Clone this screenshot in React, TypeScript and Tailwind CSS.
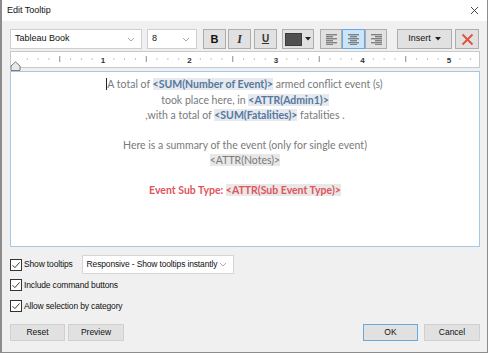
import React from "react";

const ui = { fontFamily: '"Liberation Sans", Arial, sans-serif' };
const body = { fontFamily: 'Lato, "Open Sans", Arial, sans-serif' };

function Chevron() {
  return (
    <svg width="8" height="5" viewBox="0 0 8 5" className="text-[#a0a0a0]">
      <path d="M1 1l3 3 3-3" fill="none" stroke="currentColor" strokeWidth="0.9" />
    </svg>
  );
}

function Caret() {
  return (
    <svg width="6" height="4" viewBox="0 0 6 4">
      <path d="M0 0h6L3 3.5z" fill="#222" />
    </svg>
  );
}

function AlignIcon({ kind }: { kind: "left" | "center" | "right" }) {
  const rows = [0, 1, 2, 3, 4, 5];
  return (
    <svg width="11" height="11" viewBox="0 0 11 11">
      {rows.map((r) => {
        const long = r % 2 === 0;
        const w = long ? 11 : 7;
        const x = kind === "left" ? 0 : kind === "center" ? (11 - w) / 2 : 11 - w;
        return <rect key={r} x={x} y={r * 2 + 0.3} width={w} height="1" fill="#5a5a5a" />;
      })}
    </svg>
  );
}

function Ruler() {
  const origin = 5.5;
  const inch = 86.5;
  const ticks: React.ReactNode[] = [];
  for (let i = 1; i < 54; i++) {
    const x = origin + (i * inch) / 8;
    if (x > 466) break;
    if (i % 8 === 0) {
      ticks.push(
        <text key={i} x={x} y="11" fontSize="8" fontWeight="700" textAnchor="middle" fill="#333" fontFamily="Liberation Sans, Arial, sans-serif">
          {i / 8}
        </text>
      );
    } else if (i % 4 === 0) {
      ticks.push(<rect key={i} x={x - 0.5} y="4" width="1" height="6" fill="#8a8a8a" />);
    } else {
      ticks.push(<rect key={i} x={x - 0.5} y="6.5" width="1" height="1" fill="#8a8a8a" />);
    }
  }
  return (
    <div className="relative h-[17px] bg-white border border-[#c8c8c8]">
      <svg width="467" height="15" viewBox="0 0 467 15" className="absolute left-0 top-0">
        {ticks}
      </svg>
      <svg width="11" height="10" viewBox="0 0 11 10" className="absolute left-[-1px] bottom-[-4px]">
        <path d="M1 9.5V5L5.5 0.8 10 5v4.5z" fill="#e8e8e8" stroke="#6e6e6e" strokeWidth="0.9" />
      </svg>
    </div>
  );
}

function Field({ children, red }: { children: React.ReactNode; red?: boolean }) {
  return (
    <span
      className={
        red
          ? "bg-[#e8e8e8] text-[#e0545a] font-bold"
          : "bg-[#e6e9ed] text-[#5577a0] font-bold"
      }
    >
      {children}
    </span>
  );
}

function Checkbox({ label }: { label: string }) {
  return (
    <label className="flex items-center gap-[2px]">
      <span className="w-[12px] h-[12px] bg-white border border-[#333] flex items-center justify-center">
        <svg width="10" height="10" viewBox="0 0 10 10">
          <path d="M1.5 5.2l2.4 2.4L8.6 2.4" fill="none" stroke="#222" strokeWidth="0.9" />
        </svg>
      </span>
      <span className="text-[8.5px] tracking-[-0.15px] text-[#111]">{label}</span>
    </label>
  );
}

const tb = "h-[20px] flex items-center justify-center bg-[#e1e1e1] border border-[#adadad]";
const btn = "w-[55px] h-[17px] bg-[#e1e1e1] border flex items-center justify-center text-[8.5px]";

export default function App() {
  return (
    <div
      className="w-[488px] h-[353px] bg-[#f0f0f0] border-l-2 border-b border-r border-[#8c8c8c] flex flex-col text-[#111]"
      style={ui}
    >
      <div className="h-[21px] bg-white flex items-center justify-between pl-[5px] pr-[8px]">
        <span className="text-[9px]">Edit Tooltip</span>
        <svg width="9" height="9" viewBox="0 0 9 9">
          <path d="M1 1l7 7M8 1L1 8" stroke="#333" strokeWidth="0.9" />
        </svg>
      </div>

      <div className="flex flex-col pl-[8px] pr-[7px]">
        <div className="flex items-center mt-[8px] h-[20px]">
          <div className="w-[132px] h-[20px] bg-white border border-[#cfcfcf] flex items-center justify-between pl-[4px] pr-[6px]">
            <span className="text-[9px]">Tableau Book</span>
            <Chevron />
          </div>
          <div className="w-[50px] h-[20px] bg-white border border-[#cfcfcf] flex items-center justify-between pl-[4px] pr-[6px] ml-[5px]">
            <span className="text-[9px]">8</span>
            <Chevron />
          </div>
          <div className={`${tb} w-[23px] ml-[6px]`}>
            <span className="text-[11px] font-bold">B</span>
          </div>
          <div className={`${tb} w-[23px] ml-[2px]`}>
            <span className="text-[12px] italic font-bold text-[#333]" style={{ fontFamily: '"Liberation Serif", serif' }}>I</span>
          </div>
          <div className={`${tb} w-[23px] ml-[3px]`}>
            <span className="text-[10px] font-bold underline leading-none text-[#333]">U</span>
          </div>
          <div className={`${tb} w-[32px] ml-[5px] gap-[3px]`}>
            <span className="w-[17px] h-[13px] bg-[#505050] border border-[#3c3c3c]" />
            <Caret />
          </div>
          <div className="flex ml-[6px]">
            <div className={`${tb} w-[22px]`}>
              <AlignIcon kind="left" />
            </div>
            <div className="h-[20px] w-[23px] flex items-center justify-center bg-[#cce4f7] border border-[#6aa8e0]">
              <AlignIcon kind="center" />
            </div>
            <div className={`${tb} w-[22px]`}>
              <AlignIcon kind="right" />
            </div>
          </div>
          <div className={`${tb} w-[55px] ml-[10px] gap-[4px]`}>
            <span className="text-[9px]">Insert</span>
            <Caret />
          </div>
          <div className={`${tb} w-[24px] ml-[3px]`}>
            <svg width="13" height="13" viewBox="0 0 13 13">
              <path d="M1.5 1.5l10 10M11.5 1.5l-10 10" stroke="#e2503c" strokeWidth="1.8" />
            </svg>
          </div>
        </div>

        <div className="mt-[2px]">
          <Ruler />
        </div>

        <div
          className="mt-[3px] h-[176px] bg-white border border-[#a6c8e8] flex flex-col items-center pt-[5px] text-[10.5px] leading-[15.5px] text-[#7a7a7a]"
          style={body}
        >
          <div>
            <span className="border-l border-[#222] -ml-px" />A total of <Field>&lt;SUM(Number of Event)&gt;</Field> armed conflict event (s)
          </div>
          <div>
            took place here, in <Field>&lt;ATTR(Admin1)&gt;</Field>
          </div>
          <div>
            ,with a total of <Field>&lt;SUM(Fatalities)&gt;</Field> fatalities .
          </div>
          <div className="h-[14px]" />
          <div>Here is a summary of the event (only for single event)</div>
          <div>
            <span className="bg-[#e8e8e8]">&lt;ATTR(Notes)&gt;</span>
          </div>
          <div className="h-[14px]" />
          <div className="text-[#e0545a] font-bold">
            Event Sub Type: <Field red>&lt;ATTR(Sub Event Type)&gt;</Field>
          </div>
        </div>

        <div className="flex items-center mt-[8px] h-[19px]">
          <Checkbox label="Show tooltips" />
          <div className="ml-[9px] w-[152px] h-[19px] bg-white border border-[#d6d6d6] flex items-center justify-between pl-[4px] pr-[6px]">
            <span className="text-[8.5px] tracking-[-0.15px]">Responsive - Show tooltips instantly</span>
            <Chevron />
          </div>
        </div>
        <div className="mt-[5px]">
          <Checkbox label="Include command buttons" />
        </div>
        <div className="mt-[8px]">
          <Checkbox label="Allow selection by category" />
        </div>

        <div className="flex items-center justify-between mt-[11px]">
          <div className="flex gap-[3px]">
            <div className={`${btn} border-[#d0d0d0]`}>Reset</div>
            <div className={`${btn} w-[56px] border-[#d0d0d0]`}>Preview</div>
          </div>
          <div className="flex gap-[6px]">
            <div className={`${btn} border-[#6aa8e0]`}>OK</div>
            <div className={`${btn} w-[56px] border-[#d0d0d0]`}>Cancel</div>
          </div>
        </div>
      </div>
    </div>
  );
}
